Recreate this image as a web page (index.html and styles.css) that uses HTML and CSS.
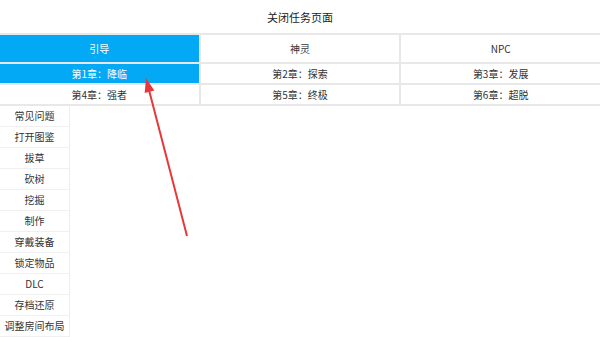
FILE: index.html
```html
<!DOCTYPE html>
<html lang="zh">
<head>
  <meta charset="utf-8">
  <title>关闭任务页面</title>
  <link rel="stylesheet" href="styles.css">
</head>
<body>
  <div class="title">关闭任务页面</div>

  <div class="tabs">
    <div class="cell head active">引导</div>
    <div class="cell head">神灵</div>
    <div class="cell head">NPC</div>
    <div class="cell active">第1章：降临</div>
    <div class="cell">第2章：探索</div>
    <div class="cell">第3章：发展</div>
    <div class="cell">第4章：强者</div>
    <div class="cell">第5章：终极</div>
    <div class="cell">第6章：超脱</div>
  </div>

  <div class="side">
    <div class="item">常见问题</div>
    <div class="item">打开图鉴</div>
    <div class="item">拔草</div>
    <div class="item">砍树</div>
    <div class="item">挖掘</div>
    <div class="item">制作</div>
    <div class="item">穿戴装备</div>
    <div class="item">锁定物品</div>
    <div class="item">DLC</div>
    <div class="item">存档还原</div>
    <div class="item">调整房间布局</div>
  </div>

  <svg class="arrow" width="600" height="337" viewBox="0 0 600 337">
    <line x1="187" y1="236" x2="149" y2="90" stroke="#e8373a" stroke-width="2"/>
    <polygon points="146,78 144.7,92.9 154.3,90.4" fill="#e8373a"/>
  </svg>
</body>
</html>
```

FILE: styles.css
```css
html, body {
  margin: 0;
  padding: 0;
  background: #fff;
  color: #333;
  font: 10px "Noto Sans CJK SC", "Liberation Sans", sans-serif;
}
body { position: relative; width: 600px; height: 337px; overflow: hidden; }

.title {
  height: 33px;
  line-height: 34px;
  text-align: center;
  font-size: 11px;
  color: #222;
}

.tabs {
  display: grid;
  grid-template-columns: 1fr 1fr 1fr;
  grid-template-rows: 27px 19px 19px;
  gap: 2px;
  padding: 2px 0;
  background: #e8e8e8;
}
.cell {
  background: #fff;
  display: flex;
  align-items: center;
  justify-content: center;
}
.cell.active { background: #03a9f4; color: #fff; }

.side {
  width: 69px;
  border-right: 1px solid #eee;
}
.item {
  height: 20px;
  line-height: 20px;
  border-bottom: 1px solid #f0f0f0;
  text-align: center;
}

.arrow { position: absolute; left: 0; top: 0; }
```
